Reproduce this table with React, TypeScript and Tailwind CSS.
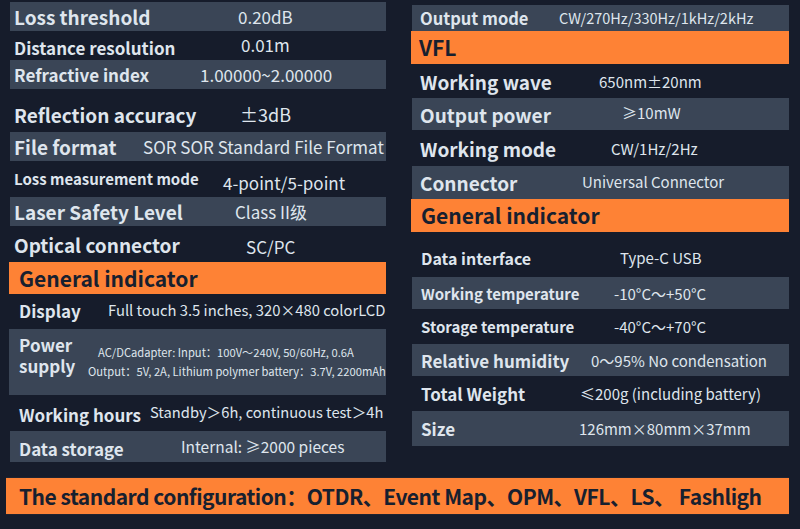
type Row = {
  label: string;
  value?: string;
  row: string;
  lab: string;
  val?: string;
};

const left: Row[] = [
  { label: "Loss threshold", value: "0.20dB", row: "h-[29px] bg-[#3a4556]", lab: "w-[228px] pl-[4px] text-[19px]", val: "text-[17px]" },
  { label: "Distance resolution", value: "0.01m", row: "h-[29px]", lab: "w-[231px] pl-[4px] text-[17px] pt-[4px]", val: "text-[17px] pb-[2px]" },
  { label: "Refractive index", value: "1.00000~2.00000", row: "h-[29px] bg-[#3a4556]", lab: "w-[190px] pl-[4px] text-[17px]", val: "text-[17px]" },
  { label: "Reflection accuracy", value: "±3dB", row: "h-[28px] mt-[11px]", lab: "w-[230px] pl-[4px] text-[19px]", val: "text-[18px]" },
  { label: "File format", value: "SOR SOR Standard File Format", row: "h-[29px] mt-[4px] bg-[#3a4556]", lab: "w-[133px] pl-[4px] text-[19px]", val: "text-[17px]" },
  { label: "Loss measurement mode", value: "4-point/5-point", row: "h-[36px]", lab: "w-[213px] pl-[4px] text-[15px] pb-[2px]", val: "text-[17px] pt-[6px]" },
  { label: "Laser Safety Level", value: "Class II级", row: "h-[29px] bg-[#3a4556]", lab: "w-[225px] pl-[4px] text-[19px]", val: "text-[17px]" },
  { label: "Optical connector", value: "SC/PC", row: "h-[36px]", lab: "w-[236px] pl-[4px] text-[19px]", val: "text-[17px] pt-[4px]" },
  { label: "General indicator", row: "h-[32px] -ml-px bg-[#fe8235]", lab: "pl-[10px] text-[21px] text-[#17202f]" },
  { label: "Display", value: "Full touch 3.5 inches, 320×480 colorLCD", row: "h-[32px]", lab: "w-[98px] pl-[9px] text-[17px]", val: "text-[14.8px]" },
];

const right: Row[] = [
  { label: "Output mode", value: "CW/270Hz/330Hz/1kHz/2kHz", row: "h-[26px] bg-[#3a4556]", lab: "w-[147px] pl-[8px] text-[16.5px]", val: "text-[14.5px]" },
  { label: "VFL", row: "h-[33px] -ml-px bg-[#fe8235]", lab: "pl-[8px] text-[21px] text-[#17202f]" },
  { label: "Working wave", value: "650nm±20nm", row: "h-[34px]", lab: "w-[187px] pl-[8px] text-[19px]", val: "text-[15px]" },
  { label: "Output power", value: "≥10mW", row: "h-[32px] bg-[#3a4556]", lab: "w-[210px] pl-[8px] text-[19px]", val: "text-[15px] pb-[3px]" },
  { label: "Working mode", value: "CW/1Hz/2Hz", row: "h-[36px]", lab: "w-[199px] pl-[8px] text-[19px]", val: "text-[15px]" },
  { label: "Connector", value: "Universal Connector", row: "h-[33px] bg-[#3a4556]", lab: "w-[170px] pl-[8px] text-[19px]", val: "text-[15px] pb-[2px]" },
  { label: "General indicator", row: "h-[33px] -ml-px bg-[#fe8235]", lab: "pl-[10px] text-[21px] text-[#17202f]" },
  { label: "Data interface", value: "Type-C USB", row: "h-[45px]", lab: "w-[208px] pl-[9px] text-[16px] pt-[6px]", val: "text-[15px] pt-[6px]" },
  { label: "Working temperature", value: "-10°C～+50°C", row: "h-[32px] bg-[#3a4556]", lab: "w-[202px] pl-[9px] text-[15px]", val: "text-[15px]" },
  { label: "Storage temperature", value: "-40°C～+70°C", row: "h-[35px]", lab: "w-[202px] pl-[9px] text-[15px]", val: "text-[15px]" },
  { label: "Relative humidity", value: "0～95% No condensation", row: "h-[32px] bg-[#3a4556]", lab: "w-[179px] pl-[9px] text-[17px]", val: "text-[15px]" },
  { label: "Total Weight", value: "≤200g (including battery)", row: "h-[35px]", lab: "w-[168px] pl-[9px] text-[17px]", val: "text-[15px]" },
  { label: "Size", value: "126mm×80mm×37mm", row: "h-[35px] bg-[#3a4556]", lab: "w-[167px] pl-[9px] text-[17px]", val: "text-[15px]" },
];

const SpecRow = ({ r }: { r: Row }) => (
  <div className={`flex items-center ${r.row}`}>
    <div className={`shrink-0 font-bold whitespace-nowrap leading-none ${r.lab}`}>
      {r.label}
    </div>
    {r.value && (
      <div className={`whitespace-nowrap leading-none ${r.val}`}>{r.value}</div>
    )}
  </div>
);

export default function App() {
  return (
    <div
      className="w-[800px] h-[529px] bg-[#161c2b] text-[#dfe5ed] overflow-hidden"
      style={{ fontFamily: '"Noto Sans CJK SC", "Noto Sans", sans-serif' }}
    >
      <div className="flex items-start pl-[10px] gap-[26px]">
        <div className="w-[376px] flex flex-col pt-[2px]">
          {left.map((r, i) => (
            <SpecRow key={i} r={r} />
          ))}
          <div className="h-[66px] mt-[3px] -ml-px bg-[#3a4556] flex items-start pt-[5px]">
            <div className="w-[74px] pl-[10px] text-[17px] font-bold leading-[21px] shrink-0">
              Power supply
            </div>
            <div className="text-[11.2px] leading-[19px] pt-[9px] whitespace-nowrap">
              <div className="pl-[15px]">AC/DCadapter: Input：100V～240V, 50/60Hz, 0.6A</div>
              <div className="pl-[5px]">Output：5V, 2A, Lithium polymer battery：3.7V, 2200mAh</div>
            </div>
          </div>
          <div className="h-[35px] flex items-center">
            <div className="w-[140px] pl-[9px] text-[17px] font-bold leading-none shrink-0 pt-[4px]">
              Working hours
            </div>
            <div className="text-[14.7px] leading-none whitespace-nowrap">
              Standby＞6h, continuous test＞4h
            </div>
          </div>
          <div className="h-[31px] mt-px bg-[#3a4556] flex items-center">
            <div className="w-[171px] pl-[9px] text-[17px] font-bold leading-none shrink-0 pt-[4px]">
              Data storage
            </div>
            <div className="text-[15.5px] leading-none whitespace-nowrap">
              Internal:&#8201;≥2000 pieces
            </div>
          </div>
        </div>
        <div className="w-[377px] flex flex-col pt-[5px]">
          {right.map((r, i) => (
            <SpecRow key={i} r={r} />
          ))}
        </div>
      </div>
      <div className="mt-[15px] ml-[6px] w-[783px] h-[38px] bg-[#fe8235] flex items-center pl-[13px] border-y border-[#1f2330]">
        <div className="text-[21px] font-bold text-[#17202f] whitespace-nowrap tracking-[-0.5px] leading-none">
          The standard configuration：OTDR、Event Map、OPM、VFL、LS、 Fashligh
        </div>
      </div>
    </div>
  );
}
